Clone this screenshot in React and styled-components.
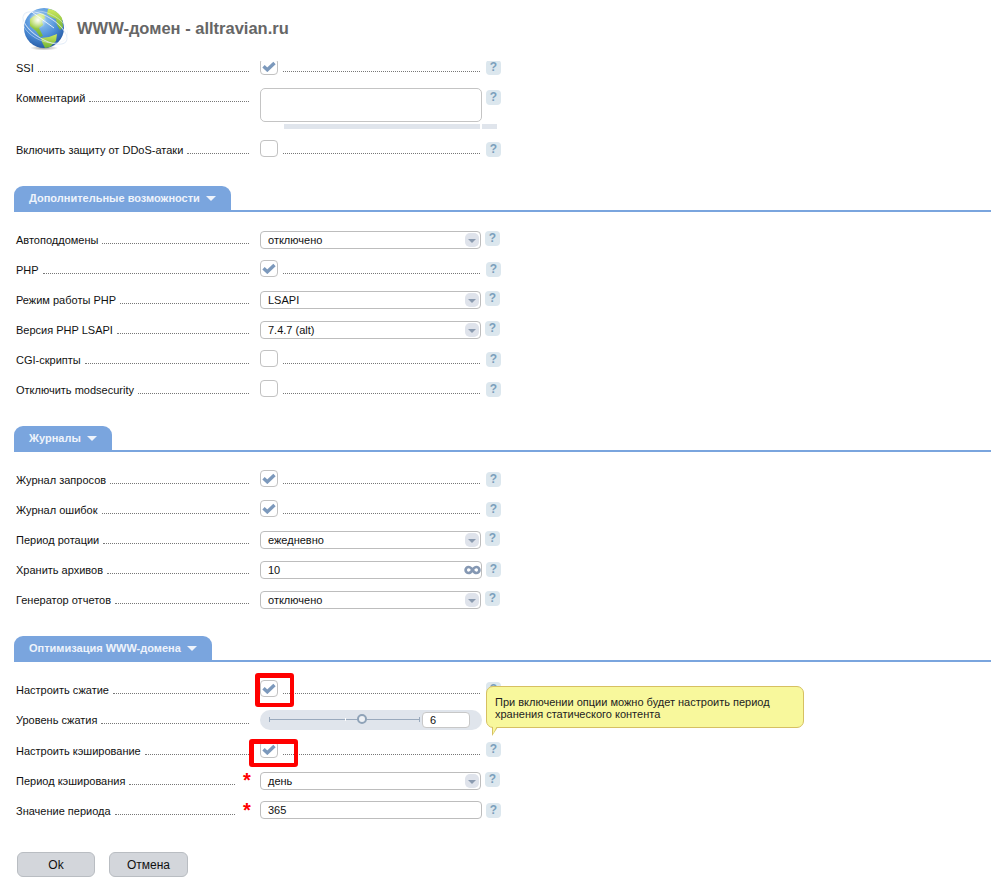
import React from "react";
import styled, { createGlobalStyle } from "styled-components";

const GlobalStyle = createGlobalStyle`
  html, body {
    margin: 0;
    padding: 0;
    background: #fff;
    overflow: hidden;
  }
  body {
    font-family: "Liberation Sans", Arial, sans-serif;
    font-size: 11px;
    color: #111;
  }
`;

const Page = styled.div`
  width: 991px;
  height: 887px;
  overflow: hidden;
`;

const Header = styled.header`
  height: 61px;
  display: flex;
  align-items: flex-start;
  padding-left: 22px;
  box-sizing: border-box;
  background: #fff;
`;

const GlobeIcon = styled.svg`
  flex: none;
  margin-top: 5px;
`;

const Title = styled.h1`
  margin: 18px 0 0 7px;
  font-size: 16.5px;
  line-height: 20px;
  font-weight: bold;
  color: #666;
`;

const Scroller = styled.div`
  height: 826px;
  overflow: hidden;
`;

const Form = styled.div`
  margin-top: -8px;
`;

const Row = styled.div`
  position: relative;
  display: flex;
  align-items: flex-start;
  height: ${(p) => p.$height || 30}px;
  padding-left: 16px;
`;

const Label = styled.div`
  width: ${(p) => (p.$required ? 219 : 233)}px;
  height: 30px;
  margin-right: ${(p) => (p.$required ? 25 : 11)}px;
  display: flex;
  line-height: 30px;
  white-space: nowrap;
  position: relative;
`;

const Leader = styled.span`
  flex: 1;
  height: 0;
  margin: 18px 0 0 4px;
  border-bottom: 1px dotted #777;
`;

const Star = styled.span`
  position: absolute;
  left: 227px;
  top: 4px;
  color: #f00;
  font-size: 20px;
  line-height: 20px;
  font-weight: bold;
`;

const Control = styled.div`
  width: 222px;
  display: flex;
  align-items: flex-start;
`;

const CheckBox = styled.span`
  position: relative;
  box-sizing: border-box;
  width: 18px;
  height: 17px;
  margin-top: 5px;
  flex: none;
  border: 1px solid #c2c2c2;
  border-radius: 4px;
  background: #fff;
  display: flex;
  align-items: center;
  justify-content: center;
`;

const CheckLeader = styled.span`
  flex: 1;
  height: 0;
  margin: 18px 2px 0 5px;
  border-bottom: 1px dotted #777;
`;

const Highlight = styled.span`
  position: absolute;
  box-sizing: border-box;
  left: ${(p) => p.$left}px;
  top: ${(p) => p.$top}px;
  width: ${(p) => p.$width}px;
  height: ${(p) => p.$h}px;
  border: solid #f00;
  border-width: 5px 4px 4px 5px;
  border-radius: 3px;
`;

const Field = styled.div`
  position: relative;
  box-sizing: border-box;
  width: ${(p) => p.$width || 222}px;
  height: 18px;
  margin-top: ${(p) => (p.$up ? 5 : 6)}px;
  padding-left: 7px;
  border: 1px solid #bdbdbd;
  border-radius: 4px;
  background: #fff;
  line-height: 16px;
`;

const SelectArrow = styled.span`
  position: absolute;
  right: 1px;
  top: 1px;
  width: 14px;
  height: 14px;
  border-radius: 5px;
  background: #dfe3eb;

  &::after {
    content: "";
    position: absolute;
    left: 3px;
    top: 6px;
    border-style: solid;
    border-width: 4px 4px 0;
    border-color: #8b9bb0 transparent transparent;
  }
`;

const InfinityIcon = styled.svg`
  position: absolute;
  right: 0;
  top: 3px;
`;

const TextArea = styled.div`
  box-sizing: border-box;
  width: 222px;
  height: 34px;
  margin-top: 5px;
  border: 1px solid #c4c4c4;
  border-radius: 5px;
  background: #fff;
`;

const ScrollBars = styled.div`
  position: absolute;
  left: 284px;
  top: 41px;
  display: flex;
  gap: 2px;
`;

const ScrollBar = styled.span`
  width: ${(p) => p.$width}px;
  height: 5px;
  background: #e0e5ec;
`;

const Help = styled.span`
  flex: none;
  width: 15px;
  height: 15px;
  margin: ${(p) => (p.$near ? "6px 0 0 3px" : p.$up ? "6px 0 0 4px" : "7px 0 0 4px")};
  border-radius: 4px;
  background: #dce7ee;
  color: #7b9fbc;
  font-size: 12px;
  font-weight: bold;
  line-height: 14px;
  text-align: center;
`;

const Slider = styled.div`
  position: relative;
  box-sizing: border-box;
  width: 222px;
  height: 20px;
  margin-top: 5px;
  border-radius: 10px;
  background: #e0e5ec;
`;

const SliderTrack = styled.span`
  position: absolute;
  left: 9px;
  top: 9px;
  width: 151px;
  height: 1px;
  background: #9aaabd;

  &::before,
  &::after {
    content: "";
    position: absolute;
    top: -2px;
    width: 1px;
    height: 5px;
    background: #9aaabd;
  }
  &::before {
    left: 0;
  }
  &::after {
    right: 0;
  }
`;

const SliderTick = styled.span`
  position: absolute;
  left: 85px;
  top: 8px;
  width: 1px;
  height: 3px;
  background: #fff;
`;

const SliderKnob = styled.span`
  position: absolute;
  left: 97px;
  top: 4px;
  box-sizing: border-box;
  width: 10px;
  height: 10px;
  border: 2px solid #8fa3b8;
  border-radius: 50%;
  background: #eef1f5;
`;

const SliderValue = styled.span`
  position: absolute;
  left: 162px;
  top: 2px;
  box-sizing: border-box;
  width: 48px;
  height: 16px;
  padding-left: 7px;
  border: 1px solid #c8c8c8;
  border-radius: 4px;
  background: #fff;
  line-height: 14px;
`;

const Tooltip = styled.div`
  position: absolute;
  left: 486px;
  top: 11px;
  z-index: 2;
  box-sizing: border-box;
  width: 318px;
  height: 42px;
  padding: 9px 8px 0;
  border: 1px solid #d6c062;
  border-radius: 7px;
  background: #f8f89c;
  line-height: 12px;
  color: #222;

  &::before,
  &::after {
    content: "";
    position: absolute;
    border-style: solid;
  }
  &::before {
    left: 5px;
    top: 40px;
    border-width: 9px 6px 0 0;
    border-color: #d6c062 transparent transparent transparent;
  }
  &::after {
    left: 6px;
    top: 39px;
    border-width: 8px 4px 0 0;
    border-color: #f8f89c transparent transparent transparent;
  }
`;

const Section = styled.section`
  margin-top: 21px;
`;

const SectionHead = styled.div`
  margin: 0 0 13px 14px;
  height: 26px;
  box-sizing: border-box;
  border-bottom: 2px solid #7aa5de;
`;

const SectionTab = styled.div`
  display: inline-flex;
  align-items: center;
  gap: 6px;
  height: 24px;
  padding: 0 15px;
  border-radius: 9px 9px 0 0;
  background: #7aa5de;
  color: #eef3fb;
  font-weight: bold;
  white-space: nowrap;

  &::after {
    content: "";
    margin-top: 1px;
    border-style: solid;
    border-width: 5px 5px 0;
    border-color: #eef3fb transparent transparent;
  }
`;

const Buttons = styled.div`
  display: flex;
  gap: 14px;
  margin: 26px 0 0 17px;
`;

const Button = styled.button`
  box-sizing: border-box;
  width: ${(p) => p.$width}px;
  height: 25px;
  padding: 0;
  border: 1px solid #b9bdc2;
  border-radius: 6px;
  background: #d3d6db;
  color: #111;
  font-family: inherit;
  font-size: 12px;
`;

function Globe() {
  return (
    <GlobeIcon width="48" height="46" viewBox="0 0 48 46">
      <defs>
        <radialGradient id="sea" cx="0.42" cy="0.3" r="0.8">
          <stop offset="0" stopColor="#9ccdf5" />
          <stop offset="0.55" stopColor="#4a8bd6" />
          <stop offset="1" stopColor="#1a4a94" />
        </radialGradient>
        <linearGradient id="land" x1="0" y1="0" x2="0" y2="1">
          <stop offset="0" stopColor="#cfe95f" />
          <stop offset="1" stopColor="#6fb233" />
        </linearGradient>
        <radialGradient id="floor">
          <stop offset="0" stopColor="#555" stopOpacity="0.6" />
          <stop offset="1" stopColor="#555" stopOpacity="0" />
        </radialGradient>
        <radialGradient id="flare">
          <stop offset="0" stopColor="#fff" />
          <stop offset="1" stopColor="#fff" stopOpacity="0" />
        </radialGradient>
      </defs>
      <ellipse cx="22" cy="43" rx="14" ry="2.500" fill="url(#floor)" />
      <circle cx="22" cy="23" r="20" fill="url(#sea)" />
      <path d="M8 14c4-4 9-6 14-5l1 4-3 3 1 4-4 3 2 4 2 4-3 1-4-6-6-5z" fill="url(#land)" />
      <path d="M26 4c6 0 11 4 14 9l1 9-3 3-3-5-1-6-5-2-4-3 1-5z" fill="url(#land)" />
      <path d="M19 33l8-1 8-3-1 7-6 6-5 1-3-6z" fill="url(#land)" />
      <ellipse
        cx="23"
        cy="23"
        rx="25"
        ry="11"
        transform="rotate(32 23 23)"
        fill="none"
        stroke="#dfeaf7"
        strokeWidth="0.900"
        opacity="0.850"
      />
      <ellipse
        cx="23"
        cy="22"
        rx="24"
        ry="14"
        transform="rotate(24 23 22)"
        fill="none"
        stroke="#eef4fb"
        strokeWidth="0.700"
        opacity="0.600"
      />
      <circle cx="16" cy="15" r="9" fill="url(#flare)" />
      <path d="M7 5l25 18" stroke="#fff" strokeWidth="1" opacity="0.800" />
    </GlobeIcon>
  );
}

const CheckMark = () => (
  <svg width="14" height="11" viewBox="0 0 14 11">
    <path d="M1.500 5.200L5.300 8.800 12.500 2" fill="none" stroke="#7c99bc" strokeWidth="3.400" />
  </svg>
);

const FieldLabel = ({ text, required }) => (
  <Label $required={required}>
    {text}
    <Leader />
    {required && <Star>*</Star>}
  </Label>
);

const CheckRow = ({ label, checked, highlight, helpUp, children }) => (
  <Row>
    <FieldLabel text={label} />
    <Control>
      <CheckBox>
        {checked && <CheckMark />}
        {highlight && <Highlight {...highlight} />}
      </CheckBox>
      <CheckLeader />
    </Control>
    <Help $up={helpUp}>?</Help>
    {children}
  </Row>
);

const SelectRow = ({ label, value, required }) => (
  <Row>
    <FieldLabel text={label} required={required} />
    <Control>
      <Field $width={221}>
        {value}
        <SelectArrow />
      </Field>
    </Control>
    <Help $near>?</Help>
  </Row>
);

const InputRow = ({ label, value, required, infinite, up }) => (
  <Row>
    <FieldLabel text={label} required={required} />
    <Control>
      <Field $up={up}>
        {value}
        {infinite && (
          <InfinityIcon width="17" height="10" viewBox="0 0 17 10">
            <path
              d="M8.500 5C7.400 3.200 6.200 2 4.600 2a3 3 0 0 0 0 6c1.600 0 2.800-1.200 3.900-3s2.300-3 3.900-3a3 3 0 0 1 0 6c-1.600 0-2.800-1.200-3.900-3z"
              fill="none"
              stroke="#8598b3"
              strokeWidth="2.700"
            />
          </InfinityIcon>
        )}
      </Field>
    </Control>
    <Help>?</Help>
  </Row>
);

const SectionTitle = ({ children }) => (
  <SectionHead>
    <SectionTab>{children}</SectionTab>
  </SectionHead>
);

export default function App() {
  return (
    <Page>
      <GlobalStyle />
      <Header>
        <Globe />
        <Title>WWW-домен - alltravian.ru</Title>
      </Header>
      <Scroller>
        <Form>
          <CheckRow label="SSI" checked />
          <Row $height={52}>
            <FieldLabel text="Комментарий" />
            <Control>
              <TextArea />
            </Control>
            <Help>?</Help>
            <ScrollBars>
              <ScrollBar $width={196} />
              <ScrollBar $width={15} />
            </ScrollBars>
          </Row>
          <CheckRow label="Включить защиту от DDoS-атаки" />

          <Section>
            <SectionTitle>Дополнительные возможности</SectionTitle>
            <SelectRow label="Автоподдомены" value="отключено" />
            <CheckRow label="PHP" checked />
            <SelectRow label="Режим работы PHP" value="LSAPI" />
            <SelectRow label="Версия PHP LSAPI" value="7.4.7 (alt)" />
            <CheckRow label="CGI-скрипты" />
            <CheckRow label="Отключить modsecurity" />
          </Section>

          <Section>
            <SectionTitle>Журналы</SectionTitle>
            <CheckRow label="Журнал запросов" checked />
            <CheckRow label="Журнал ошибок" checked />
            <SelectRow label="Период ротации" value="ежедневно" />
            <InputRow label="Хранить архивов" value="10" infinite />
            <SelectRow label="Генератор отчетов" value="отключено" />
          </Section>

          <Section>
            <SectionTitle>Оптимизация WWW-домена</SectionTitle>
            <CheckRow
              label="Настроить сжатие"
              checked
              highlight={{ $left: -6, $top: -8, $width: 39, $h: 34 }}
            >
              <Tooltip>
                При включении опции можно будет настроить период
                <br />
                хранения статического контента
              </Tooltip>
            </CheckRow>
            <Row $height={31}>
              <FieldLabel text="Уровень сжатия" />
              <Control>
                <Slider>
                  <SliderTrack />
                  <SliderTick />
                  <SliderKnob />
                  <SliderValue>6</SliderValue>
                </Slider>
              </Control>
            </Row>
            <CheckRow
              label="Настроить кэширование"
              checked
              helpUp
              highlight={{ $left: -12, $top: -3, $width: 49, $h: 28 }}
            />
            <SelectRow label="Период кэширования" value="день" required />
            <InputRow label="Значение периода" value="365" required up />
          </Section>

          <Buttons>
            <Button $width={78}>Ok</Button>
            <Button $width={79}>Отмена</Button>
          </Buttons>
        </Form>
      </Scroller>
    </Page>
  );
}
